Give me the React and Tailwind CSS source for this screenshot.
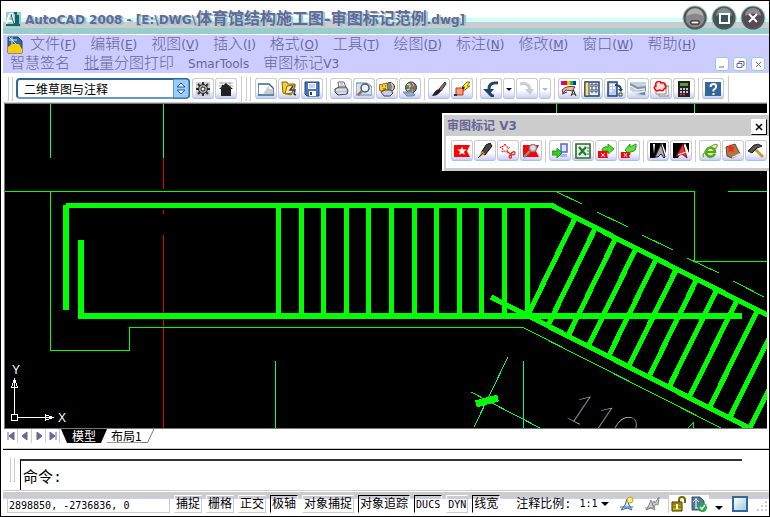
import React from "react";

const star = "M8 3.4 9.3 6.4 12.6 6.6 10 8.7 11 12 8 10.2 5 12 6 8.7 3.4 6.6 6.7 6.4Z";

const icons = {
	gear: (
		<>
			<path d="M1 1h14v14H1z" fill="#cfcfcf" />
			<path d="M8 1v14M1 8h14M3 3l10 10M13 3 3 13" stroke="#333" strokeWidth="2" />
			<circle cx="8" cy="8" r="4.500" fill="#aaa" stroke="#222" />
			<circle cx="8" cy="8" r="2" fill="#fff" stroke="#222" />
		</>
	),
	home: (
		<>
			<path d="M1 2h14M1 5h14M4 1v5M12 1v5" stroke="#aaa" />
			<path d="M8 2 15 8h-2v7H3V8H1Z" fill="#222" />
			<path d="M4 4h2v3H4z" fill="#222" />
		</>
	),
	sheet: (
		<>
			<path d="M0 3h11l5 5v6H0z" fill="#fff" stroke="#336699" strokeWidth="1.400" />
			<path d="M5 13 11 4v4h4v5z" fill="#ccc" />
		</>
	),
	open: (
		<>
			<path d="M1 1h5l1 2h7v3l-4 8-8-2z" fill="#ffcc33" stroke="#886600" />
			<path d="m6 5 8-1-3 8-7 1z" fill="#ffee99" stroke="#886600" />
			<path d="m12 5-3 4h5l-1 4 2 1" stroke="#333366" strokeWidth="1.500" />
		</>
	),
	save: (
		<>
			<path d="M1 1h14v14H3l-2-2z" fill="#4477bb" stroke="#224477" />
			<path d="M4 2h8v6H4zM5 10h7v5H5z" fill="#fff" />
			<path d="M5 4h6M5 6h6" stroke="#99aacc" />
			<path d="M6 11h2v3H6z" fill="#333366" />
		</>
	),
	print: (
		<>
			<path d="M5 1h6l2 6H6z" fill="#fff" stroke="#667" />
			<path d="m2 8 4-2h7l2 3-1 4-9 1-3-3z" fill="#bbc" stroke="#445" />
			<path d="M3 9h10M5 12h8" stroke="#fff" />
			<path d="M7 3h3M7 5h4" stroke="#99a" />
		</>
	),
	preview: (
		<>
			<path d="M0 2h11l5 4v8H0z" fill="#d4e4f4" stroke="#5588aa" />
			<circle cx="9" cy="7" r="4" fill="#e8f4ff" stroke="#555" strokeWidth="1.500" />
			<path d="m6 10-4 4" stroke="#aa6655" strokeWidth="2.500" />
		</>
	),
	publish: (
		<>
			<circle cx="11" cy="6" r="4.500" fill="#6688bb" stroke="#336" />
			<path d="M12 2q4 4 0 8" stroke="#ffcc33" strokeWidth="1.500" />
			<path d="m0 4 8-2 1 7-8 1z" fill="#ffcc33" stroke="#996600" />
			<path d="M3 5h1M6 5h1M4 8h3" stroke="#663300" />
			<path d="m2 11 4-2h6l2 3-3 3H5z" fill="#ccd" stroke="#445" />
		</>
	),
	globe: (
		<>
			<circle cx="9" cy="6.500" r="5.500" fill="#3399aa" stroke="#336" />
			<path d="M5 4q3-2 3 1t-3 4M10 2q3 4 0 10" stroke="#ffcc33" strokeWidth="1.500" />
			<path d="M9 1q4 5 2 10M4 7h10" stroke="#cc3333" />
			<path d="M1 11h9l3 3-3 1H5z" fill="#99aacc" stroke="#778899" />
		</>
	),
	brush: (
		<>
			<path d="m14 1-6 7 2 2 5-7z" fill="#996655" stroke="#333" />
			<path d="M8 8q-3 0-7 7 6 0 9-5z" fill="#222" />
		</>
	),
	block: (
		<>
			<path d="m13 1-5 5h3l-3 5 8-6h-3l3-4z" fill="#ffee33" stroke="#996600" />
			<path d="M2 7h7v7H2z" fill="#ff9977" stroke="#cc3300" />
			<path d="M0 13h3v2H0zM8 6h2v2H8z" fill="#003399" />
		</>
	),
	undo: (
		<>
			<path d="M15 2Q6 1 6 8t5 7" stroke="#224466" strokeWidth="3" />
			<path d="M0 8h11l-5 6z" fill="#224466" />
		</>
	),
	redo: (
		<>
			<path d="M1 3q9-2 10 6" stroke="#ccc" strokeWidth="3" />
			<path d="M6 8h9l-4 6z" fill="#ccc" />
		</>
	),
	caret: <path d="M5 7h6l-3 3z" fill="#000066" />,
	caretOff: <path d="M5 7h6l-3 3z" fill="#bbb" />,
	match: (
		<>
			<path d="M0 0h3v4H0z" fill="#cc00cc" />
			<path d="M3 0h3v4H3z" fill="#ff0000" />
			<path d="M6 0h3v4H6z" fill="#ffcc00" />
			<path d="M9 0h3v4H9z" fill="#00cc33" />
			<path d="M12 0h3v4h-3z" fill="#0033cc" />
			<path d="M1 9q5-5 13-3l-3 4-6-1-3 3z" fill="#eebb99" stroke="#663333" />
			<path d="m1 13 5-2M10 15l2.500-6L15 15m-4-2h3" stroke="#222" />
		</>
	),
	props: (
		<>
			<path d="M1 1h14v14H1z" fill="#ddeeff" stroke="#224477" strokeWidth="1.500" />
			<path d="M1 1h4v14H1z" fill="#ffdd66" stroke="#224477" />
			<path d="M7 3h2v3H7zM11 3h2v3h-2zM7 8h2v3H7zM11 8h2v3h-2z" fill="#fff" stroke="#446" />
		</>
	),
	tools: (
		<>
			<path d="M1 1h9v14H1z" fill="#bbccee" stroke="#224477" strokeWidth="1.500" />
			<path d="M3 4h2M3 7h2M3 10h2M6 4h2M6 7h2" stroke="#fff" strokeWidth="2" />
			<path d="M8 4q6 0 6 5" stroke="#224466" strokeWidth="2" />
			<path d="M11 8h5l-2 3z" fill="#224466" />
			<path d="M12 12h3v3h-3z" fill="#ffee66" stroke="#224466" />
		</>
	),
	sheets: (
		<>
			<path d="M0 1h16v14H8L0 9z" fill="#bfd4e4" />
			<path d="m0 2 8 4 8-1v5l-5 2-11-6z" fill="#8a9199" />
			<path d="m0 5 7 4 8-1M4 12l11-2" stroke="#eee" strokeWidth="1.500" />
			<path d="m8 13 7-2v3z" fill="#5588aa" />
		</>
	),
	cloud: (
		<>
			<path d="M6 5h10v10H6z" fill="#eee" stroke="#888" />
			<path d="M3 3h10v10H3z" fill="#fff" stroke="#888" />
			<path d="M4 1q3-2 4 1 4-1 4 2 2 3-1 4-1 3-4 1-4 2-5-1-2-2 1-3-1-3 1-4z" fill="#ffdede" stroke="#ff0000" strokeWidth="1.500" />
		</>
	),
	calc: (
		<>
			<path d="M2 0h12v16H2z" fill="#222" />
			<path d="M4 2h8v3H4z" fill="#5c9a3c" />
			<path d="M4 8h2M7 8h2M10 8h2M4 11h2M7 11h2M10 11h2" stroke="#fff" strokeWidth="1.500" />
			<path d="M4 13.500h2M7 13.500h2" stroke="#f33" strokeWidth="1.500" />
		</>
	),
	help: (
		<>
			<path d="M0 1h16v14H0z" fill="#336699" />
			<path d="M5.500 6q0-3 3-3t2.500 3q0 1.500-2.500 3v1.500M8.500 12v2" stroke="#fff" strokeWidth="2" />
		</>
	),
	flag: (
		<>
			<path d="M0 2h16l-3 6 3 6H0z" fill="#ff0000" />
			<path d={star} fill="#fff" />
		</>
	),
	pen: (
		<>
			<path d="m9 2 4-2 2 3-7 9-4-2z" fill="#444" stroke="#111" />
			<path d="m5 8 3 3-7 4z" fill="#cc9944" />
			<path d="m1 15 5-5" stroke="#553300" />
		</>
	),
	trail: (
		<>
			<path d="m5 1 1.500 3 3 .5-2.500 2 .5 3L5 8 2 9l1-3-3-2 3.500-.5z" fill="#fff" stroke="#ff0000" strokeDasharray="2 1" />
			<path d="m7 8 3 3q5-4 5-1t-4 1q-3 3-1 4t1-4" stroke="#dd3333" strokeWidth="1.300" />
		</>
	),
	flagFind: (
		<>
			<path d="M0 2h16l-3 6 3 6H0z" fill="#ff0000" />
			<circle cx="10" cy="5" r="3.500" fill="#ddd" stroke="#888" strokeWidth="1.500" />
			<path d="m7 8-6 6" stroke="#888" strokeWidth="2.500" />
		</>
	),
	importIcon: (
		<>
			<path d="M9 1h6v8H9z" fill="#dde4ff" stroke="#5566cc" strokeWidth="1.500" />
			<path d="M8 11h7v3H8z" fill="#aab4ee" />
			<path d="M0 8h5V5l5 5-5 5v-3H0z" fill="#33cc22" stroke="#229911" />
		</>
	),
	excel: (
		<>
			<path d="M1 1h14v14H1z" fill="#e4f2e4" stroke="#336633" strokeWidth="1.600" />
			<path d="m4 4 7 8M11 4l-7 8" stroke="#227733" strokeWidth="2.200" />
			<path d="M12 5h2M12 8h2M12 11h2" stroke="#338844" />
		</>
	),
	flagOut: (
		<>
			<path d="M4 8q0-5 6-4V1l6 5-6 5V8z" fill="#55dd33" stroke="#229911" />
			<path d="M0 8h10l-1 3 1 4H0z" fill="#ff0000" />
			<path d="m3 10 4 4m0-4-4 4" stroke="#fff" />
		</>
	),
	flagIn: (
		<>
			<path d="M15 1q1 8-6 8v3L4 7l5-6v3z" fill="#66dd44" stroke="#229911" />
			<path d="M0 9h9l-1 3 1 3H0z" fill="#ff0000" />
			<path d="m3 10 3 4m0-4-3 4" stroke="#fff" />
		</>
	),
	cadDark: (
		<>
			<path d="M0 0h16v10L12 0 5 15H0z" fill="#000" />
			<path d="M5 1H3l1 10z" fill="#fff" />
			<path d="m11 1-6 13h3l3-3 3 4 1-1z" fill="#aaa" stroke="#222" />
		</>
	),
	cadRed: (
		<>
			<path d="M0 0h16v10L12 0 5 15H0z" fill="#000" />
			<path d="m10 1-7 13 6-3 5 4z" fill="#ee3333" stroke="#881111" />
			<path d="m5 12 8-3" stroke="#fff" />
		</>
	),
	browser: (
		<>
			<path d="M13 11q-3 4-7 2-3-2-2-5 2-4 6-3 3 1 3 4H5" stroke="#55aa11" strokeWidth="2.600" />
			<path d="M2 14Q-1 12 6 6t9-4q1 1-2 4" stroke="#77aa33" strokeWidth="1.300" />
		</>
	),
	book: (
		<>
			<path d="m1 4 9-3 5 10-8 4-5-2z" fill="#b07840" stroke="#664422" />
			<path d="m7 14 8-4v2l-8 3z" fill="#eee" />
			<path d="m6 1 1 3h3L8 6l1 3-3-1-3 1 1-3-2-2 3-.5z" fill="#ff2222" />
		</>
	),
	hammer: (
		<>
			<path d="m7 6 8 8" stroke="#cc9922" strokeWidth="3" />
			<path d="m0 8 6-6q5-2 8 1L9 5 4 10z" fill="#555" stroke="#222" />
		</>
	),
};

function Icon({ name }) {
	return (
		<svg viewBox="0 0 16 16" className="h-4 w-4 shrink-0" fill="none" aria-hidden="true">
			{icons[name]}
		</svg>
	);
}

function ToolButton({ name, narrow }) {
	return (
		<button
			aria-label={name}
			className={`flex h-[21px] shrink-0 items-center justify-center overflow-hidden rounded-[3px] border border-[#cccccc] border-b-[#99cccc] bg-linear-to-b from-white from-60% to-[#ccccff] ${narrow ? "w-3" : "w-[22px]"}`}
		>
			<Icon name={name} />
		</button>
	);
}

function ToolGroups({ groups }) {
	return groups.map((group, i) => (
		<React.Fragment key={i}>
			{i > 0 && <div className="mx-[3px] h-[22px] w-px shrink-0 bg-[#cccccc]" />}
			<div className="flex gap-px">
				{group.map((name) => (
					<ToolButton key={name} name={name} narrow={name.startsWith("caret")} />
				))}
			</div>
		</React.Fragment>
	));
}

function Grip() {
	return (
		<div className="flex h-6 w-[6px] shrink-0 gap-[2px]">
			<div className="w-[2px] border-r border-b border-[#cccccc]" />
			<div className="w-[2px] border-r border-b border-[#cccccc]" />
		</div>
	);
}

function WindowButton({ label, fill, children }) {
	return (
		<button aria-label={label} className="h-[26px] w-[26px]">
			<svg viewBox="0 0 26 26" className="h-[26px] w-[26px]" fill="none">
				<circle cx="13" cy="13" r="12.500" fill="#99cccc" />
				<circle cx="13" cy="13" r="10.500" fill={fill} stroke="#555" strokeWidth="2" />
				<path d="M5 11a8 8 0 0 1 16 0q-8-5-16 0z" fill="#fff" fillOpacity=".35" />
				{children}
			</svg>
		</button>
	);
}

function TitleBar() {
	return (
		<header className="flex h-[33px] items-center bg-[linear-gradient(#fff_0_17px,#ccffff_17px_21px,#cccccc_21px_27px,#99cccc_27px)] pr-[3px] pl-[3px] text-[#666699]">
			<svg viewBox="0 0 16 16" className="mt-1 h-4 w-4 shrink-0" fill="none">
				<path d="M0 0h15v15H0z" fill="#99cccc" />
				<path d="M0 12 4 2h2l2 10M2 9h5" stroke="#fff" strokeWidth="2" />
				<path d="M8 1h2v11H8M12 3v9M0 13h14" stroke="#116666" strokeWidth="2" />
				<path d="M5 2 8 12" stroke="#116666" />
			</svg>
			<h1 className="ml-[3px] flex-1 pt-1 whitespace-nowrap font-['DejaVu_Sans','Noto_Sans_CJK_SC',sans-serif] text-xs font-bold [text-shadow:2px_1px_#99cccc]">
				AutoCAD 2008 - [E:\DWG\
				<span className="text-base leading-4">体育馆结构施工图-审图标记范例</span>
				.dwg]
			</h1>
			<div className="flex gap-[3px]">
				<WindowButton label="最小化" fill="#888888">
					<path d="M9 16h8v3H9z" fill="#fff" stroke="#111" />
				</WindowButton>
				<WindowButton label="最大化" fill="#3c5656">
					<path d="M9 9h9v9H9z" stroke="#fff" strokeWidth="2" />
				</WindowButton>
				<WindowButton label="关闭" fill="#554a55">
					<path d="m9 9 8 8m0-8-8 8" stroke="#fff" strokeWidth="2" />
				</WindowButton>
			</div>
		</header>
	);
}

const menus = [
	["文件", "F"],
	["编辑", "E"],
	["视图", "V"],
	["插入", "I"],
	["格式", "O"],
	["工具", "T"],
	["绘图", "D"],
	["标注", "N"],
	["修改", "M"],
	["窗口", "W"],
	["帮助", "H"],
];

function MenuBar() {
	return (
		<nav className="mt-px h-[38px] bg-[#ccccff] pl-1 font-['DejaVu_Sans','Noto_Sans_CJK_SC',sans-serif] text-[15px] leading-[19px] font-light text-[#666699]">
			<div className="flex items-center whitespace-nowrap">
				<svg viewBox="0 0 16 18" className="mr-[7px] h-[18px] w-4 shrink-0" fill="none">
					<path d="M1 1h10l4 4v12H1z" fill="#336699" stroke="#224466" />
					<path d="M2 4h8M5 1v8M2 1l8 8" stroke="#cceeff" />
					<path d="m1 11 4-3h7l3 5v4H1z" fill="#ffcc00" />
				</svg>
				<div className="flex gap-[14px]">
					{menus.map(([name, key]) => (
						<button key={key} className="flex items-center">
							{name}
							<span className="pt-px text-xs leading-[18px] font-normal">
								(<u>{key}</u>)
							</span>
						</button>
					))}
				</div>
			</div>
			<div className="flex items-center gap-[14px] pr-1 pl-[3px] whitespace-nowrap">
				<button>智慧签名</button>
				<button>
					<u>批</u>量分图打印
				</button>
				<button className="text-xs font-normal">SmarTools</button>
				<button className="flex flex-1 items-center">
					审图标记<span className="text-xs font-normal">V3</span>
				</button>
				<div className="flex gap-1">
					{["M3 9h5", "M3 5.500h5v4H3zM5 5V3.500h5v4H9", "m4 4 5 5m0-5-5 5"].map((d) => (
						<button key={d} aria-label="子窗口" className="h-[14px] w-[14px] rounded-[3px] border border-[#99cccc] bg-white">
							<svg viewBox="0 0 12 12" className="h-3 w-3">
								<path d={d} fill="none" stroke="#666699" />
							</svg>
						</button>
					))}
				</div>
			</div>
		</nav>
	);
}

function MainToolbar() {
	return (
		<div className="flex h-[29px] items-center bg-white pt-[2px] pl-1">
			<Grip />
			<div className="relative ml-[3px] h-[21px] w-[174px] shrink-0">
				<select
					aria-label="工作空间"
					className="block h-full w-full appearance-none rounded-[4px] border-2 border-[#336699] border-b-[#6699cc] bg-white pl-[6px] font-['Noto_Sans_CJK_SC',sans-serif] text-xs leading-4 text-black"
				>
					<option>二维草图与注释</option>
				</select>
				<svg viewBox="0 0 17 21" className="pointer-events-none absolute top-0 right-0 h-[21px] w-[17px]">
					<path d="M0 1h13q3 0 3 3v13q0 3-3 3H0z" fill="#99ccff" stroke="#336699" />
					<path d="m4 9 4-4 4 4zM4 12l4 4 4-4z" fill="#fff" stroke="#225599" />
				</svg>
			</div>
			<div className="ml-[2px] flex gap-px">
				<ToolButton name="gear" />
				<ToolButton name="home" />
			</div>
			<div className="mr-[3px] ml-1 h-[26px] w-px shrink-0 bg-[#cccccc]" />
			<Grip />
			<div className="ml-1 flex items-center">
				<ToolGroups
					groups={[
						["sheet", "open", "save"],
						["print", "preview", "publish", "globe"],
						["brush", "block"],
						["undo", "caret", "redo", "caretOff"],
						["match", "props", "tools", "sheets", "cloud", "calc"],
						["help"],
					]}
				/>
			</div>
			<div className="ml-1 h-[26px] w-px shrink-0 bg-[#cccccc]" />
		</div>
	);
}

// world coordinates of the drawing start at (5, 104)
function Drawing() {
	const stirrups = Array.from({ length: 12 }, (_, i) => i);
	return (
		<svg className="block h-[324px] w-full bg-black" fill="none" shapeRendering="crispEdges">
			<g transform="translate(-5 -104)">
				<g stroke="#00ff66">
					<path d="M50.500 104v54M163.500 104v54M556.500 104v10M694.500 104v10M728 191.500h45M275.500 361v70M523.500 361v70" />
					<path d="M508 357 474 427M488 401l54 28" />
				</g>
				<path d="M163.500 158v31M163.500 210v4M163.500 235v200" stroke="#e00000" />
				<g stroke="#00ff00">
					<path d="M5 191.500h689.500v70H775M50.500 191v159.500h79v-23H523l199 101" />
					<path d="m557 192 25 12m15 8 31 15m14 8 31 15m14 8 32 15m14 8 31 16M471 392l17 9M688 428l5-5v5" />
				</g>
				<g stroke="#00ff00" strokeWidth="5">
					<path d="M66 205.500h486L775 319M491 297l259 131.500" />
					<path d="M66 205v105M80.500 240v79M78 316h664" strokeWidth="6" />
					{stirrups.map((i) => (
						<path key={i} d={`M${278 + Math.round(i * 22.6)} 206v110`} />
					))}
					{stirrups.map((i) => (
						<path key={i} d={`M${575 + i * 20.2} ${218 + i * 10.4}L${527.5 + i * 20.2} ${316 + i * 10.2}`} />
					))}
					<path d="m476 404 22-6" strokeWidth="7" />
				</g>
				<text
					x="563"
					y="416"
					transform="rotate(27 563 416)"
					fill="#fff"
					className="font-['Lato',sans-serif] text-[42px] font-thin italic"
				>
					110
				</text>
				<g stroke="#fff">
					<path d="M11.500 414.500h6v6h-6zM14.500 414v-35M18 417.500h34M14.500 379l-3 8h6zM53 417.500l-8-3v6z" />
				</g>
				<g fill="#fff" className="font-['Liberation_Sans',sans-serif] text-xs">
					<text x="12" y="374">Y</text>
					<text x="58" y="422">X</text>
				</g>
			</g>
		</svg>
	);
}

function LayoutTabs() {
	const arrows = ["M4 3v8M10 3v8L5 7z", "M9 3v8L4 7z", "M5 3v8l5-4z", "M10 3v8M4 3v8l5-4z"];
	return (
		<div className="flex h-[14px] bg-white font-['Noto_Sans_CJK_SC',sans-serif] text-xs leading-[14px]">
			{arrows.map((d) => (
				<button key={d} aria-label="切换布局" className="h-[14px] w-[14px] border-r border-[#cccccc]">
					<svg viewBox="0 0 14 14" className="h-[14px] w-[14px]">
						<path d={d} fill="#666699" stroke="#666699" />
					</svg>
				</button>
			))}
			<button className="ml-px h-[14px] bg-black px-[11px] text-white [clip-path:polygon(0_0,100%_0,calc(100%-6px)_100%,6px_100%)]">
				模型
			</button>
			<button className="border-b border-[#999999] pl-1">布局1</button>
			<svg viewBox="0 0 12 14" className="h-[14px] w-3">
				<path d="M0 13.500h5.500L12 0" fill="none" stroke="#777" />
			</svg>
		</div>
	);
}

function CommandLine() {
	return (
		<div className="mt-[6px] flex border-t border-black bg-white pt-[9px] pl-[6px] shadow-[0_-1px_#cccccc]">
			<div className="-mt-px">
				<Grip />
			</div>
			<div className="mr-[27px] ml-[5px] flex h-[31px] flex-1 items-end border-t-2 border-l border-t-[#333333] border-l-black pb-px pl-[2px] font-['Liberation_Mono','Noto_Sans_CJK_SC',monospace] text-[15px] leading-5">
				<label htmlFor="command">命令:</label>
				<input id="command" className="h-5 min-w-0 flex-1 outline-none" />
			</div>
		</div>
	);
}

const toggles = [
	["捕捉", false],
	["栅格", false],
	["正交", false],
	["极轴", true],
	["对象捕捉", false],
	["对象追踪", true],
	["DUCS", true],
	["DYN", false],
	["线宽", true],
];

function StatusBar() {
	return (
		<footer className="mt-px flex h-6 items-center bg-[linear-gradient(#cccccc_0_6px,#ccccff_6px_7px,#fff_7px)] pl-1 font-['DejaVu_Sans_Mono','Noto_Sans_CJK_SC',monospace] text-xs whitespace-nowrap">
			<output className="mt-1 h-[14px] w-[163px] shrink-0 border border-t-0 border-[#cccccc] pl-px text-[10px] leading-[13px]">
				2898850, -2736836, 0
			</output>
			<div className="ml-1 flex gap-1">
				{toggles.map(([name, on]) => (
					<button
						key={name}
						aria-pressed={on}
						className={`h-[18px] border px-px ${name.startsWith("D") ? "pt-px text-[10px]" : "text-xs"} leading-4 ${on ? "border-t-black border-r-white border-b-white border-l-black" : "border-t-white border-r-[#cccccc] border-b-[#cccccc] border-l-white"}`}
					>
						{name}
					</button>
				))}
			</div>
			<button className="ml-4 flex items-center leading-4">
				注释比例:
				<span className="ml-2 text-[10px]">1:1</span>
				<svg viewBox="0 0 8 4" className="ml-[3px] h-1 w-2">
					<path d="M0 0h8L4 4z" />
				</svg>
			</button>
			<button aria-label="注释可见性" className="ml-[10px]">
				<svg viewBox="0 0 16 16" className="h-4 w-4" fill="none">
					<path d="m8 3 2 6 3 5-5-2-6 2 4-5zM1 11h13" fill="#cceeff" stroke="#336699" />
					<circle cx="11" cy="4" r="3" fill="#ffee66" stroke="#cc9933" />
				</svg>
			</button>
			<button aria-label="自动缩放" className="ml-[9px]">
				<svg viewBox="0 0 16 16" className="h-4 w-4" fill="none">
					<path d="m7 4 2 5 2 5-4-2-5 2 3-5zM1 12h10M8 8l2-3 1 2 4-6-1 8-2-1-2 3z" fill="#ccc" stroke="#888" />
				</svg>
			</button>
			<div className="ml-2 flex h-[18px] items-center gap-1 border-l border-[#cccccc] bg-white px-[2px]">
				<svg viewBox="0 0 16 16" className="h-4 w-4" fill="none">
					<path d="M8 7V4q0-3 3-3t3 3v3" stroke="#776600" strokeWidth="2" />
					<path d="M1 6h10v9H1z" fill="#ccaa00" stroke="#333300" />
					<path d="M2 8h8M2 11h8" stroke="#665500" />
					<path d="M6 8v5" stroke="#fff" strokeWidth="2" />
				</svg>
				<svg viewBox="0 0 16 16" className="h-4 w-4" fill="none">
					<path d="M1 1h8l4 4v9H1z" fill="#557799" stroke="#335577" />
					<path d="M5 2v10M2 6l3-3 3 3M4 12h5" stroke="#fff" />
					<circle cx="11.500" cy="11.500" r="4.500" fill="#22aa44" />
					<path d="m9 11 2 2 3-4" stroke="#fff" strokeWidth="1.500" />
				</svg>
			</div>
			<button aria-label="状态栏菜单" className="mt-2 ml-[6px]">
				<svg viewBox="0 0 8 4" className="h-1 w-2">
					<path d="M0 0h8L4 4z" />
				</svg>
			</button>
			<button aria-label="全屏显示" className="ml-[9px] h-4 w-4 border-2 border-[#336699] bg-linear-to-br from-white to-[#99ccdd]" />
			<svg viewBox="0 0 12 12" className="mt-[6px] ml-auto h-3 w-3" fill="#cccccc">
				<path d="M8 0h2v2H8zM4 4h2v2H4zM8 4h2v2H8zM0 8h2v2H0zM4 8h2v2H4zM8 8h2v2H8z" />
			</svg>
		</footer>
	);
}

function MarkPanel() {
	return (
		<section className="absolute top-[112px] right-0 left-[441px] overflow-hidden border-t-2 border-l-2 border-white bg-[#cccccc] pb-[3px] pl-[2px]">
			<div className="flex h-[21px] items-center justify-between pr-[2px] pl-px">
				<h2 className="font-['DejaVu_Sans','Noto_Sans_CJK_SC',sans-serif] text-xs leading-4 font-bold text-[#666699]">
					审图标记 V3
				</h2>
				<button aria-label="关闭" className="mt-[3px] h-4 w-4 border border-white border-r-black border-b-black bg-white">
					<svg viewBox="0 0 14 14" className="h-[14px] w-[14px]">
						<path d="m4 4 6 6m0-6-6 6" stroke="#000" strokeWidth="1.500" />
					</svg>
				</button>
			</div>
			<div className="flex h-8 items-center bg-white pb-[3px] pl-[5px]">
				<ToolGroups
					groups={[
						["flag", "pen", "trail", "flagFind"],
						["importIcon", "excel", "flagOut", "flagIn"],
						["cadDark", "cadRed"],
						["browser", "book", "hammer"],
					]}
				/>
			</div>
		</section>
	);
}

export default function App() {
	return (
		<div className="relative flex min-h-screen flex-col overflow-hidden border border-black bg-white pl-[2px]">
			<TitleBar />
			<MenuBar />
			<MainToolbar />
			<main className="mr-[2px] border-t border-[#cccccc] pl-px">
				<div className="border-t border-b border-l border-[#777777]">
					<Drawing />
				</div>
				<LayoutTabs />
			</main>
			<CommandLine />
			<div className="border-t border-[#cccccc]" />
			<StatusBar />
			<MarkPanel />
		</div>
	);
}
